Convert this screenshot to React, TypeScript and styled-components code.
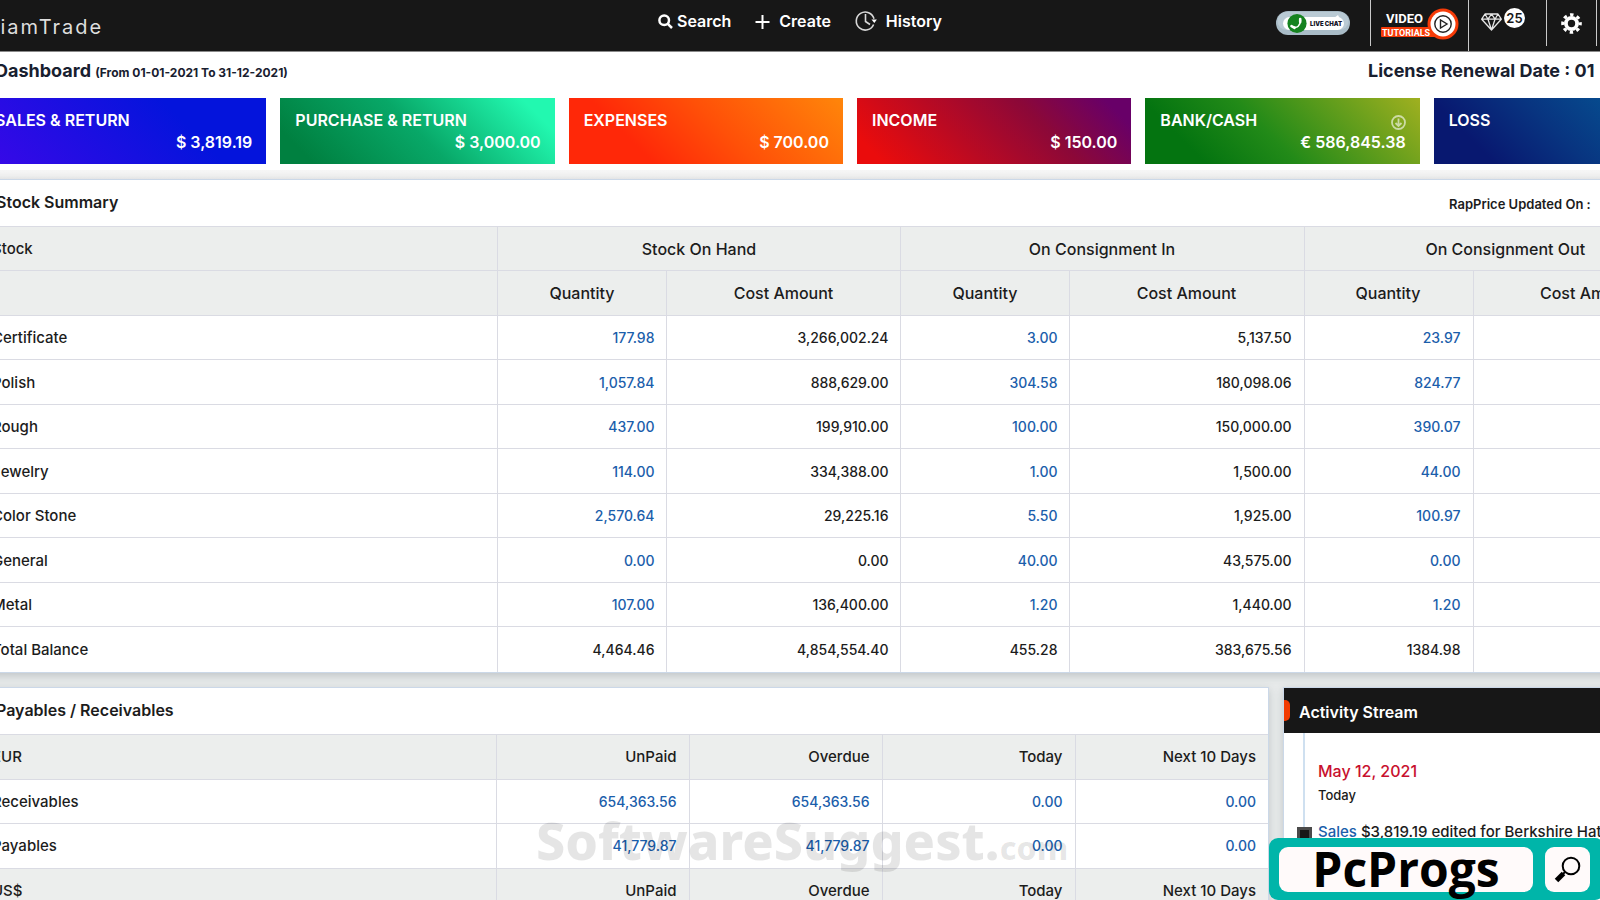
import React from "react";
import styled, { createGlobalStyle } from "styled-components";

const Global = createGlobalStyle`
  *, *::before, *::after { box-sizing: border-box; }
  html, body { margin: 0; height: 100%; overflow: hidden; }
  body {
    background: #e7eaea;
    color: #1c1c1c;
    font-family: Inter, "Liberation Sans", sans-serif;
    font-size: 15px;
    font-weight: 500;
  }
  #root { height: 100%; }
  a { color: #1b5eab; text-decoration: none; }
  h1, h2, p { margin: 0; }
`;

const Shell = styled.div`
  height: 100vh;
  overflow: hidden;
  position: relative;
`;

const TopBar = styled.header`
  height: 52px;
  background: #171717;
  border-bottom: 1px solid #8a8a8a;
  display: grid;
  grid-template-columns: 1fr auto 1fr;
  color: #fff;
`;

const Brand = styled.a`
  justify-self: start;
  margin-left: -16px;
  padding-top: 2px;
  line-height: 50px;
  font-size: 20px;
  font-weight: 400;
  letter-spacing: 2px;
  color: #dedede;
`;

const Nav = styled.nav`
  display: flex;
  gap: 24px;
  align-items: center;
  height: 42px;
`;

const NavButton = styled.button<{ $gap: number }>`
  display: flex;
  align-items: center;
  gap: ${(p) => p.$gap}px;
  border: 0;
  padding: 0;
  background: none;
  color: #fff;
  font: inherit;
  font-size: 16px;
  font-weight: 600;
`;

const Tools = styled.div`
  display: flex;
  justify-content: flex-end;
  align-items: stretch;
  padding-right: 3px;
`;

const Tool = styled.button<{ $width: number; $tall?: boolean }>`
  width: ${(p) => p.$width}px;
  height: ${(p) => (p.$tall ? 51 : 46)}px;
  display: flex;
  align-items: center;
  justify-content: center;
  gap: 2px;
  border: 0;
  border-right: 1px solid #c9c9c9;
  padding: 0 0 ${(p) => (p.$tall ? 3 : 0)}px;
  background: none;
  color: #fff;
`;

const GemTool = styled(Tool)`
  justify-content: flex-start;
  padding: 0 0 2px 12px;
`;

const Count = styled.span`
  width: 21px;
  height: 20px;
  margin-bottom: 8px;
  border-radius: 50%;
  background: #fff;
  color: #171717;
  font: 600 13px/20px Inter, sans-serif;
  text-align: center;
`;

const Summary = styled.section`
  height: 127px;
  background: linear-gradient(#fff 118px, #f6f6f6 118px, #eee);
`;

const Wide = styled.div`
  margin: 0 -108px 0 -20px;
`;

const Heading = styled.div`
  display: flex;
  justify-content: space-between;
  padding: 0 0 0 15px;
  height: 46px;
  color: #18202f;
`;

const Title = styled.h1`
  font-size: 18px;
  line-height: 38px;
  font-weight: 700;
  white-space: nowrap;
  small { font-size: 12px; }
`;

const License = styled.p`
  width: 340px;
  font-size: 18px;
  line-height: 38px;
  font-weight: 700;
  white-space: nowrap;
`;

const Tiles = styled.div`
  display: grid;
  grid-template-columns: calc((100% - 70px) / 6 + 10px) repeat(5, 1fr);
  gap: 14px;
`;

const Tile = styled.article<{ $bg: string }>`
  height: 66px;
  padding: 11px 14px 0 15px;
  background: linear-gradient(45deg, ${(p) => p.$bg});
  color: #fff;
  font-size: 16px;
  font-weight: 600;
  line-height: 22px;
`;

const TileName = styled.div`
  display: flex;
  justify-content: space-between;
  align-items: center;
  height: 22px;
  svg { margin-top: 4px; opacity: 0.6; }
`;

const Amount = styled.div`
  text-align: right;
`;

const Panel = styled.section`
  background: #fff;
  border: 1px solid #cbd8e8;
  box-shadow: 0 3px 8px rgba(80, 90, 100, 0.25);
`;

const PanelHead = styled.div`
  height: 46px;
  padding: 0 0 2px 15px;
  display: flex;
  justify-content: space-between;
  align-items: center;
  h2 { font-size: 16px; font-weight: 600; }
`;

const RapPrice = styled.p`
  width: 258px;
  padding-top: 4px;
  font-size: 13px;
  font-weight: 600;
  white-space: nowrap;
`;

const Table = styled.table`
  width: 100%;
  table-layout: fixed;
  border-collapse: collapse;
  tr { height: 44px; }
  tr:nth-child(even) { height: 45px; }
  th, td {
    padding: 0 12px 0 11px;
    border-top: 1px solid #dadbe3;
    border-left: 1px solid #dadbe3;
    font-weight: 500;
    text-align: right;
    white-space: nowrap;
  }
  td { font-size: 14px; }
  th:first-child { text-align: left; border-left: 0; }
`;

const GreyRow = styled.tr<{ $center?: boolean }>`
  background: #eceeed;
  th:not(:first-child) {
    text-align: ${(p) => (p.$center ? "center" : "right")};
    font-size: ${(p) => (p.$center ? 16 : 15)}px;
  }
`;

const Periods = styled(Table)`
  tr { height: 45px; }
  tr:nth-child(even) { height: 44px; }
`;

const Lower = styled.div`
  display: grid;
  grid-template-columns: minmax(0, 1fr) 425px;
  gap: 14px;
  margin-top: 14px;
`;

const Stream = styled(Panel)`
  height: 260px;
`;

const StreamHead = styled.div`
  height: 45px;
  display: flex;
  align-items: center;
  background: #171717;
  color: #fff;
  h2 { padding-top: 3px; font-size: 16px; font-weight: 600; }
  &::before {
    content: "";
    width: 6px;
    height: 21px;
    margin-right: 9px;
    border-radius: 0 5px 5px 0;
    background: #f23a00;
  }
`;

const StreamBody = styled.div`
  margin-left: 19px;
  padding: 26px 0 0 13px;
  height: 213px;
  border-left: 2px solid #cfe0f0;
  white-space: nowrap;
`;

const StreamDate = styled.p`
  font-size: 16px;
  line-height: 24px;
  color: #c8102e;
`;

const StreamDay = styled.p`
  font-size: 13px;
  line-height: 24px;
`;

const Event = styled.p`
  display: flex;
  gap: 6px;
  margin: 13px 0 0 -21px;
  line-height: 24px;
  font-size: 15px;
  align-items: center;
  &::before {
    content: "";
    width: 15px;
    height: 15px;
    margin-top: 6px;
    border: 3px solid #4a4a4a;
    background: #171717;
  }
`;

const Watermark = styled.div`
  position: absolute;
  left: 536px;
  bottom: 18px;
  font: 800 52px/68px "Noto Sans", sans-serif;
  color: rgba(0, 0, 0, 0.1);
  pointer-events: none;
  white-space: nowrap;
  small { font-size: 32px; }
`;

const SearchBadge = styled.form`
  position: absolute;
  right: -4px;
  bottom: 0;
  width: 335px;
  height: 62px;
  padding: 0 14px 0 10px;
  display: flex;
  align-items: center;
  gap: 12px;
  border-radius: 9px;
  background: #00b5a9;
`;

const BadgeField = styled.label`
  flex: 1;
  height: 45px;
  display: flex;
  align-items: center;
  border-radius: 9px;
  background: #fffafa;
`;

const BadgeInput = styled.input`
  width: 100%;
  height: 62px;
  flex-shrink: 0;
  border: 0;
  padding: 0;
  background: none;
  color: #000;
  font: 700 48px/62px "Open Sans", sans-serif;
  text-align: center;
`;

const BadgeButton = styled.button`
  width: 45px;
  height: 45px;
  border: 0;
  border-radius: 9px;
  padding: 0;
  display: grid;
  place-items: center;
  background: #fffafa;
`;

const SearchIcon = () => (
  <svg width="15" height="15" viewBox="0 0 15 15" fill="none" stroke="#fff" strokeWidth="2.5">
    <circle cx="6.2" cy="6.2" r="4.8" />
    <path d="M9.8 9.8 14 14" />
  </svg>
);
const PlusIcon = () => (
  <svg width="15" height="18" viewBox="0 0 15 18" stroke="#fff" strokeWidth="2">
    <path d="M7.5 3v14M.5 10h14" />
  </svg>
);
const HistoryIcon = () => (
  <svg width="22" height="22" viewBox="0 0 22 22" fill="none" stroke="#d8d8d8" strokeWidth="1.6">
    <path d="M18.600 14.500A9 9 0 1 1 19 8.800" />
    <path d="M10.5 4v7.5l4.5 3" />
    <path d="M16.500 9.500h5.400l-2.600 3.500z" fill="#fff" stroke="none" />
  </svg>
);
const LiveChat = () => (
  <svg width="74" height="24" viewBox="0 0 74 24" role="img" aria-label="Live chat">
    <rect width="74" height="24" rx="12" fill="#a9bcc7" />
    <rect x="1.5" y="1" width="71" height="18" rx="9" fill="#b9cad4" />
    <rect x="7" y="6" width="61" height="13" rx="6.5" fill="#fff" />
    <path d="M58 7l4-3 2 4z" fill="#fff" />
    <circle cx="21" cy="12.5" r="9.6" fill="#168320" />
    <path d="M16.500 15.500c4.500 2.500 8-1 8-6.500" fill="none" stroke="#fff" strokeWidth="1.500" />
    <path d="M15.500 15.200l3 1.600M24.200 8v3" stroke="#fff" strokeWidth="2.600" strokeLinecap="round" />
    <text x="34" y="15" fontSize="6" fontWeight="900" fontFamily="Inter" fill="#141428">LIVE CHAT</text>
  </svg>
);
const Tutorials = () => (
  <svg width="78" height="32" viewBox="0 0 78 32" role="img" aria-label="Video tutorials">
    <rect x="0" y="19" width="62" height="10" rx="1" fill="#f63b08" />
    <circle cx="62" cy="16" r="15.5" fill="#f63b08" />
    <circle cx="62" cy="16" r="12.5" fill="#fff" />
    <circle cx="62" cy="16" r="8.2" fill="none" stroke="#222" strokeWidth="1.4" />
    <path d="M59.5 12v8l6.5-4z" fill="none" stroke="#222" strokeWidth="1.4" />
    <text x="5" y="15" fontSize="13" fontWeight="700" fontFamily="Roboto" fill="#fff">VIDEO</text>
    <text x="1" y="27.500" fontSize="9" fontWeight="700" fontFamily="Roboto" fill="#fff">TUTORIALS</text>
  </svg>
);
const Diamond = () => (
  <svg width="21" height="18" viewBox="0 0 21 18" fill="none" stroke="#e6e6e6" strokeWidth="1.3" strokeLinejoin="round">
    <path d="M4 1h13l3.300 5.200L10.500 17 .7 6.200zM.7 6.200h19.600M4 1l3 5.200L10.500 1 14 6.200 17 1M7 6.200 10.500 17 14 6.200" />
  </svg>
);
const Gear = () => (
  <svg width="21" height="21" viewBox="-10.500 -10.500 21 21" fill="none" stroke="#fff">
    <circle r="5.600" strokeWidth="3.800" />
    <circle r="8.800" strokeWidth="3" strokeDasharray="3.456 3.456" strokeDashoffset="1.728" />
  </svg>
);
const DownIcon = () => (
  <svg width="15" height="15" viewBox="0 0 15 15" fill="none" stroke="#fff" strokeWidth="1.800">
    <circle cx="7.500" cy="7.500" r="6.500" />
    <path d="M7.500 3.500v7M4.500 8l3 3 3-3" />
  </svg>
);
const Magnifier = () => (
  <svg width="27" height="27" viewBox="0 0 27 27" fill="none" stroke="#000">
    <circle cx="17" cy="10" r="8.300" strokeWidth="2" />
    <path d="M11 16l-2 2" strokeWidth="2" />
    <path d="M9.500 17.500 2.500 24.500" strokeWidth="5" />
  </svg>
);

const tiles = [
  { name: "SALES & RETURN", amount: "$ 3,819.19", bg: "#3a08e8, #0414dc 70%" },
  { name: "PURCHASE & RETURN", amount: "$ 3,000.00", bg: "#008040 10%, #08a868 50%, #22f8b0 90%" },
  { name: "EXPENSES", amount: "$ 700.00", bg: "#ff2808 25%, #ff5008 55%, #ff860a" },
  { name: "INCOME", amount: "$ 150.00", bg: "#ea0c0c 8%, #8c0838 66%, #680068 92%" },
  { name: "BANK/CASH", amount: "€ 586,845.38", bg: "#047410 18%, #228a18 45%, #a0b020", down: true },
  { name: "LOSS", amount: "", bg: "#081870 18%, #083480 45%, #0468a0" },
];

const stock = [
  ["Certificate", "177.98", "3,266,002.24", "3.00", "5,137.50", "23.97"],
  ["Polish", "1,057.84", "888,629.00", "304.58", "180,098.06", "824.77"],
  ["Rough", "437.00", "199,910.00", "100.00", "150,000.00", "390.07"],
  ["Jewelry", "114.00", "334,388.00", "1.00", "1,500.00", "44.00"],
  ["Color Stone", "2,570.64", "29,225.16", "5.50", "1,925.00", "100.97"],
  ["General", "0.00", "0.00", "40.00", "43,575.00", "0.00"],
  ["Metal", "107.00", "136,400.00", "1.20", "1,440.00", "1.20"],
  ["Total Balance", "4,464.46", "4,854,554.40", "455.28", "383,675.56", "1384.98"],
];

const balances = [
  ["Receivables", "654,363.56", "654,363.56", "0.00", "0.00"],
  ["Payables", "41,779.87", "41,779.87", "0.00", "0.00"],
];

const QuantityCol = styled.col`
  width: 169px;
`;
const CostCol = styled.col`
  width: 234px;
`;
const PeriodCol = styled.col`
  width: 193px;
`;

const PeriodHead = ({ currency }: { currency: string }) => (
  <GreyRow>
    <th scope="col">{currency}</th>
    <th scope="col">UnPaid</th>
    <th scope="col">Overdue</th>
    <th scope="col">Today</th>
    <th scope="col">Next 10 Days</th>
  </GreyRow>
);

export default function App() {
  return (
    <Shell>
      <Global />
      <TopBar>
        <Brand href="#">DiamTrade</Brand>
        <Nav>
          <NavButton $gap={4}><SearchIcon />Search</NavButton>
          <NavButton $gap={9}><PlusIcon />Create</NavButton>
          <NavButton $gap={9}><HistoryIcon />History</NavButton>
        </Nav>
        <Tools>
          <Tool $width={115}><LiveChat /></Tool>
          <Tool $width={98} $tall><Tutorials /></Tool>
          <GemTool $width={78}><Diamond /><Count>25</Count></GemTool>
          <Tool $width={50} aria-label="Settings"><Gear /></Tool>
        </Tools>
      </TopBar>

      <Summary>
        <Wide>
          <Heading>
            <Title>Dashboard <small>(From 01-01-2021 To 31-12-2021)</small></Title>
            <License>License Renewal Date : 01</License>
          </Heading>
          <Tiles>
            {tiles.map((t) => (
              <Tile key={t.name} $bg={t.bg}>
                <TileName>{t.name}{t.down && <DownIcon />}</TileName>
                <Amount>{t.amount}</Amount>
              </Tile>
            ))}
          </Tiles>
        </Wide>
      </Summary>

      <Wide>
        <Panel>
          <PanelHead>
            <h2>Stock Summary</h2>
            <RapPrice>RapPrice Updated On :</RapPrice>
          </PanelHead>
          <Table>
            <colgroup>
              <col />
              <QuantityCol /><CostCol />
              <QuantityCol /><CostCol />
              <QuantityCol /><CostCol />
            </colgroup>
            <thead>
              <GreyRow $center>
                <th scope="col">Stock</th>
                <th colSpan={2}>Stock On Hand</th>
                <th colSpan={2}>On Consignment In</th>
                <th colSpan={2}>On Consignment Out</th>
              </GreyRow>
              <GreyRow $center>
                <th />
                <th>Quantity</th><th>Cost Amount</th>
                <th>Quantity</th><th>Cost Amount</th>
                <th>Quantity</th><th>Cost Amount</th>
              </GreyRow>
            </thead>
            <tbody>
              {stock.map(([name, ...cells]) => (
                <tr key={name}>
                  <th scope="row">{name}</th>
                  {cells.map((c, i) => (
                    <td key={i}>{i % 2 === 0 && name !== "Total Balance" ? <a href="#">{c}</a> : c}</td>
                  ))}
                  <td />
                </tr>
              ))}
            </tbody>
          </Table>
        </Panel>

        <Lower>
          <Panel>
            <PanelHead><h2>Payables / Receivables</h2></PanelHead>
            <Periods>
              <colgroup>
                <col />
                <PeriodCol /><PeriodCol /><PeriodCol /><PeriodCol />
              </colgroup>
              <tbody>
                <PeriodHead currency="EUR" />
                {balances.map(([name, ...cells]) => (
                  <tr key={name}>
                    <th scope="row">{name}</th>
                    {cells.map((c, i) => <td key={i}><a href="#">{c}</a></td>)}
                  </tr>
                ))}
                <PeriodHead currency="US$" />
              </tbody>
            </Periods>
          </Panel>
          <Stream>
            <StreamHead><h2>Activity Stream</h2></StreamHead>
            <StreamBody>
              <StreamDate>May 12, 2021</StreamDate>
              <StreamDay>Today</StreamDay>
              <Event><span><a href="#">Sales</a> $3,819.19 edited for Berkshire Hathaway</span></Event>
            </StreamBody>
          </Stream>
        </Lower>
      </Wide>

      <Watermark>SoftwareSuggest.<small>com</small></Watermark>
      <SearchBadge>
        <BadgeField>
          <BadgeInput aria-label="Search" defaultValue="PcProgs" />
        </BadgeField>
        <BadgeButton type="button" aria-label="Search"><Magnifier /></BadgeButton>
      </SearchBadge>
    </Shell>
  );
}
